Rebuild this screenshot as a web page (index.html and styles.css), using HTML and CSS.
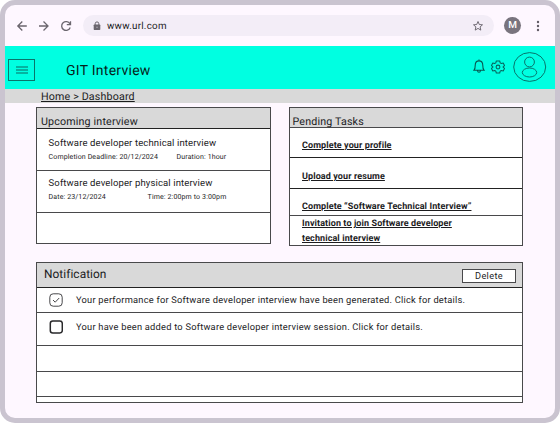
FILE: index.html
```html
<!DOCTYPE html>
<html lang="en">
<head>
<meta charset="utf-8">
<title>GIT Interview</title>
<link rel="stylesheet" href="styles.css">
</head>
<body>
<div class="window">
  <div class="toolbar">
    <svg class="nav" viewBox="0 0 64 16" fill="none" stroke="#6b666e" stroke-width="1.3">
      <path d="M10.800 8H1.800M6.300 3.500 1.800 8 6.300 12.500M23 8h9M27.500 3.500 32 8 27.500 12.500"/>
      <path d="M53.900 5.800A4.400 4.400 0 1 0 54.200 9.500M54.500 3.200V6.700H50.800"/>
    </svg>
    <div class="address">
      <svg class="lock" viewBox="0 0 8 10"><path d="M2.200 4V2.700a1.800 1.800 0 0 1 3.600 0V4" fill="none" stroke="#6b666e"/><rect x=".7" y="3.600" width="6.600" height="5.400" rx=".7" fill="#6b666e"/><circle cx="4" cy="6.300" r=".8" fill="#aaa4ae"/></svg>
      <span class="url">www.url.com</span>
      <svg class="star" viewBox="0 0 12 12"><path d="M6 1.500 7.300 4.500 10.500 4.800 8.100 6.900 8.800 10.100 6 8.400 3.200 10.100 3.900 6.900 1.500 4.800 4.700 4.500Z" fill="none" stroke="#625d66" stroke-width=".9"/></svg>
    </div>
    <span class="account">M</span>
    <svg class="more" viewBox="0 0 4 12" fill="#625d66"><circle cx="2" cy="2" r="1.200"/><circle cx="2" cy="6" r="1.200"/><circle cx="2" cy="10" r="1.200"/></svg>
  </div>
  <header class="header">
    <div class="menu"><svg viewBox="0 0 12 8" stroke="#086b62" stroke-width="1.100"><path d="M0 1h12M0 4h12M0 7h12"/></svg></div>
    <h1 class="brand">GIT Interview</h1>
    <svg class="bell" viewBox="0 0 12 15" fill="none" stroke="#07564f" stroke-width="1.100"><path d="M1 11.200c1.200-1.200 1.200-2.300 1.200-4.700C2.200 3.700 3.600 1.900 6 1.900s3.800 1.800 3.800 4.600c0 2.400 0 3.500 1.200 4.700ZM4.500 11.500c.2 2.300 2.800 2.300 3 0M6 .5v1.400"/></svg>
    <svg class="gear" viewBox="0 0 14 14" fill="none" stroke="#07655d" stroke-width="1.050"><path d="M5.300 1h3.400l.5 1.900 1.100.6 1.900-.5 1.300 2.600-1.400 1.300v.2l1.400 1.300-1.300 2.600-1.900-.5-1.100.6-.5 1.900H5.300l-.5-1.900-1.100-.6-1.900.5L.5 8.400l1.400-1.300v-.2L.5 5.600 1.800 3l1.900.5 1.100-.6Z" stroke-linejoin="round"/><circle cx="7" cy="7" r="1.900"/></svg>
    <svg class="avatar" viewBox="0 0 34 30" fill="none" stroke="#07746b" stroke-width="1"><ellipse cx="16.700" cy="15" rx="16" ry="14.400"/><circle cx="16.500" cy="10" r="4.900"/><ellipse cx="16.500" cy="20.500" rx="7.200" ry="4.500"/></svg>
  </header>
  <nav class="crumbs"><span>Home &gt; Dashboard</span></nav>
  <main class="content">
    <div class="columns">
      <section class="card upcoming">
        <h2>Upcoming interview</h2>
        <div class="interview">
          <h3>Software developer technical interview</h3>
          <p><span class="deadline">Completion Deadline: 20/12/2024</span><span>Duration: 1hour</span></p>
        </div>
        <div class="interview physical">
          <h3>Software developer physical interview</h3>
          <p><span class="date">Date: 23/12/2024</span><span>Time: 2:00pm to 3:00pm</span></p>
        </div>
        <div class="blank"></div>
      </section>
      <section class="card tasks">
        <h2>Pending Tasks</h2>
        <div class="task"><a>Complete your profile</a></div>
        <div class="task tall"><a>Upload your resume</a></div>
        <div class="task short"><a>Complete “Software Technical Interview”</a></div>
        <div class="task invite"><a>Invitation to join Software developer<br>technical interview</a></div>
      </section>
    </div>
    <section class="card notifications">
      <div class="bar"><h2>Notification</h2><button>Delete</button></div>
      <div class="note first"><svg class="check" viewBox="0 0 14 14" fill="none" stroke="#48484b"><rect x=".8" y=".8" width="12.400" height="12.400" rx="3.400"/><path d="m4 7 2.200 2.200L10.200 5"/></svg><span>Your performance for Software developer interview have been generated. Click for details.</span></div>
      <div class="note second"><svg class="check" viewBox="0 0 14 14" fill="none" stroke="#29292b" stroke-width="1.500"><rect x="1.300" y="1" width="12" height="12" rx="2.500"/></svg><span>Your have been added to Software developer interview session. Click for details.</span></div>
      <div class="note"></div>
      <div class="note last"></div>
    </section>
  </main>
</div>
</body>
</html>
```
FILE: styles.css
```css
* { box-sizing: border-box; }
body { margin: 0; background: #fff; font-family: Roboto, "Liberation Sans", sans-serif; color: #1c1c1e; text-rendering: geometricPrecision; }
h1, h2, h3, p { margin: 0; font-weight: 400; }
svg { display: block; flex: none; }
.window { width: 560px; height: 423px; border: 5px solid #cac4d0; border-radius: 15px; background: #fef7ff; overflow: hidden; }
.toolbar { height: 41px; display: flex; align-items: center; padding-left: 11px; }
.nav { width: 64px; height: 16px; }
.address { width: 411px; height: 21px; margin-left: 3px; border-radius: 11px; background: #f3edf7; display: flex; align-items: center; padding: 0 10px; }
.lock { width: 8px; height: 10px; }
.url { margin-left: 6px; padding-top: 1px; font-size: 9.800px; letter-spacing: .24px; flex: 1; }
.star { width: 12px; height: 12px; }
.account { width: 17px; height: 17px; margin-left: 10px; border-radius: 50%; background: #79747e; color: #fff; font-size: 10px; font-weight: 500; line-height: 17px; text-align: center; }
.more { width: 4px; height: 12px; margin-left: 15px; }
.header { height: 43px; background: #00ffe1; display: flex; align-items: center; padding-left: 3px; }
.menu { width: 27px; height: 22px; margin-top: 4px; border: 1px solid #08766c; display: flex; align-items: center; justify-content: center; }
.menu svg { width: 12px; height: 8px; }
.brand { margin: 7px 0 0 31px; width: 407px; font-size: 14px; letter-spacing: .26px; color: #061f1c; white-space: nowrap; }
.bell { width: 12px; height: 15px; margin-bottom: 2px; }
.gear { width: 14px; height: 14px; margin: 0 0 2px 6px; }
.avatar { width: 34px; height: 30px; margin: 0 0 1px 8px; }
.crumbs { height: 14px; padding-left: 36px; background: #d9d9d9; font-size: 10.700px; line-height: 15px; letter-spacing: .15px; text-decoration: underline; text-underline-offset: 1px; text-decoration-thickness: 1px; }
.content { padding: 4px 0 0 31px; width: 518px; }
.columns { display: flex; justify-content: space-between; align-items: flex-start; }
.card { border: 1px solid #49494b; background: #fff; }
.upcoming { width: 235px; height: 137px; }
.tasks { width: 234px; height: 139px; }
.card h2 { background: #d9d9d9; white-space: nowrap; }
.upcoming h2 { height: 21px; padding: 2px 0 0 4px; border-bottom: 1px solid #222; font-size: 10.700px; line-height: 23px; letter-spacing: .16px; }
.interview { height: 42px; padding: 8px 0 0 11.600px; border-bottom: 1px solid #49494b; }
.interview h3 { font-size: 9.500px; line-height: 13px; letter-spacing: .13px; white-space: nowrap; }
.interview p { display: flex; margin-top: 3px; font-size: 7px; line-height: 9px; letter-spacing: .13px; white-space: nowrap; }
.interview.physical { padding-top: 6px; }
.deadline { width: 128px; }
.date { width: 99px; }
.tasks h2 { height: 20px; padding: 2px 0 0 2.500px; border-bottom: 1px solid #49494b; font-size: 10.700px; line-height: 23px; letter-spacing: .16px; }
.task { height: 30px; padding: 12px 0 0 12px; border-bottom: 1px solid #222; font-size: 9px; font-weight: 700; line-height: 13px; letter-spacing: .1px; text-decoration: underline; text-underline-offset: 1px; white-space: nowrap; }
.task.tall { height: 31px; padding-top: 13px; }
.task.short { height: 27px; border-color: #49494b; }
.task.invite { height: 29px; padding-top: 1px; line-height: 15px; border: 0; }
.notifications { width: 487px; height: 141px; margin-top: 16px; }
.bar { height: 25px; padding: 0 6px 0 7px; border-bottom: 1px solid #222; background: #d9d9d9; display: flex; align-items: center; justify-content: space-between; }
.bar h2 { margin-bottom: 2px; font-size: 11.900px; letter-spacing: .05px; }
.bar button { width: 54px; height: 14px; margin-top: 1px; padding: 0; border: 1px solid #49494b; background: #fff; color: #1c1c1e; font: 9.200px/12px Roboto, sans-serif; letter-spacing: .35px; }
.note { height: 26px; padding-left: 12px; border-bottom: 1px solid #49494b; display: flex; align-items: center; font-size: 9.300px; letter-spacing: .223px; white-space: nowrap; }
.check { width: 14px; height: 14px; margin-right: 13px; }
.note.first { height: 25px; }
.note.second { height: 33px; padding-bottom: 5px; }
.note.second span { padding-top: 2px; }
.note.last { height: 25px; }
```
